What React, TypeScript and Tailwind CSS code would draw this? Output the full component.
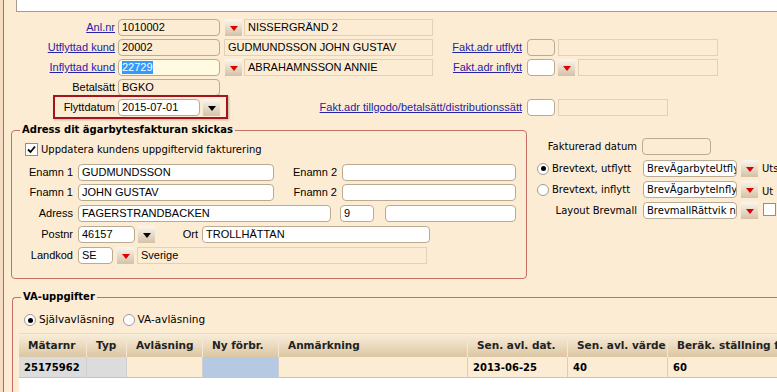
import React from 'react'

// legacy "ägarbyte" form – Tahoma/Verdana look approximated with Liberation Sans / DejaVu Sans

const TAH = "font-['Liberation_Sans',Arial,sans-serif] text-[11px]"
const VER = "font-['DejaVu_Sans',Verdana,sans-serif] text-[10px]"

function Tri({ color = '#e00000' }: { color?: string }) {
  return (
    <svg width="8" height="5" viewBox="0 0 8 5" className="mt-[2px]">
      <polygon points="0,0 8,0 4,5" fill={color} />
    </svg>
  )
}

function DropBtn({ dark = false }: { dark?: boolean }) {
  return (
    <div className="w-[17px] h-[17px] shrink-0 flex items-center justify-center bg-linear-to-b from-[#fbf6ee] to-[#d3c2a7]">
      <Tri color={dark ? '#000000' : '#e00000'} />
    </div>
  )
}

function Field({
  w,
  value = '',
  bg = 'bg-white',
  font = TAH,
  children,
}: {
  w: string
  value?: string
  bg?: string
  font?: string
  children?: React.ReactNode
}) {
  return (
    <div
      className={`${w} ${bg} ${font} h-[17px] shrink-0 border border-[#b9aa92] rounded-[4px] px-[3px] flex items-center overflow-hidden whitespace-nowrap text-black`}
    >
      {children ?? value}
    </div>
  )
}

function ReadOnly({ w, value = '' }: { w: string; value?: string }) {
  return (
    <div className={`${w} ${TAH} h-[17px] shrink-0 border border-[#e2d1b8] px-[3px] flex items-center overflow-hidden whitespace-nowrap text-black`}>
      {value}
    </div>
  )
}

function Label({ w, text, link = false, font = TAH }: { w: string; text: string; link?: boolean; font?: string }) {
  return (
    <div className={`${w} ${font} shrink-0 text-right whitespace-nowrap ${link ? 'text-[#2323a8] underline' : 'text-black'}`}>
      {text}
    </div>
  )
}

function Radio({ checked = false }: { checked?: boolean }) {
  return (
    <div className="w-[12px] h-[12px] shrink-0 rounded-full border border-[#9c9c9c] bg-white flex items-center justify-center">
      {checked && <div className="w-[5px] h-[5px] rounded-full bg-black" />}
    </div>
  )
}

function CheckBox({ checked = false }: { checked?: boolean }) {
  return (
    <div className="w-[13px] h-[13px] shrink-0 border border-[#8f8f8f] bg-white flex items-center justify-center">
      {checked && (
        <svg width="9" height="9" viewBox="0 0 9 9">
          <path d="M1 4.5 L3.5 7 L8 1.5" stroke="#000" strokeWidth="1.8" fill="none" />
        </svg>
      )}
    </div>
  )
}

const cols = [
  { name: 'Mätarnr', w: 'w-[68px]', cell: 'bg-[#dcdcdc]', value: '25175962' },
  { name: 'Typ', w: 'w-[40px]', cell: 'bg-[#dcdcdc]', value: '' },
  { name: 'Avläsning', w: 'w-[76px]', cell: '', value: '' },
  { name: 'Ny förbr.', w: 'w-[76px]', cell: 'bg-[#b6c9e2]', value: '' },
  { name: 'Anmärkning', w: 'w-[189px]', cell: '', value: '' },
  { name: 'Sen. avl. dat.', w: 'w-[100px]', cell: '', value: '2013-06-25' },
  { name: 'Sen. avl. värde', w: 'w-[100px]', cell: '', value: '40' },
  { name: 'Beräk. ställning flyttdatum', w: 'w-[160px]', cell: '', value: '60' },
]

export default function App() {
  return (
    <div className="w-[777px] h-[392px] overflow-hidden bg-[#f6dcc3] pl-[3px]">
      <div className="h-full border-l border-[#c4625a] bg-[#fdecd4] flex flex-col">
        {/* top white strip */}
        <div className="ml-[12px] h-[12px] shrink-0 bg-white border-l border-b border-[#a99b8a]" />

        {/* header rows */}
        <div className="flex flex-col gap-[3px] mt-[7px] -ml-[4px]">
          <div className="flex items-center h-[17px]">
            <Label w="w-[115px]" text="Anl.nr" link />
            <div className="ml-[3px]"><Field w="w-[102px]" value="1010002" bg="bg-[#fdecd4]" /></div>
            <div className="ml-[5px]"><DropBtn /></div>
            <div className="ml-[2px]"><ReadOnly w="w-[189px]" value="NISSERGRÄND 2" /></div>
          </div>
          <div className="flex items-center h-[17px]">
            <Label w="w-[115px]" text="Utflyttad kund" link />
            <div className="ml-[3px]"><Field w="w-[102px]" value="20002" bg="bg-[#fdecd4]" /></div>
            <div className="ml-[4px]"><ReadOnly w="w-[209px]" value="GUDMUNDSSON JOHN GUSTAV" /></div>
            <Label w="w-[89px]" text="Fakt.adr utflytt" link />
            <div className="ml-[5px]"><Field w="w-[28px]" bg="bg-[#fdecd4]" /></div>
            <div className="ml-[3px]"><ReadOnly w="w-[160px]" /></div>
          </div>
          <div className="flex items-center h-[17px]">
            <Label w="w-[115px]" text="Inflyttad kund" link />
            <div className="ml-[3px]">
              <Field w="w-[102px]" bg="bg-[#fffbe2]">
                <span className="bg-[#3399ff] text-white leading-[13px]">22729</span>
              </Field>
            </div>
            <div className="ml-[5px]"><DropBtn /></div>
            <div className="ml-[2px]"><ReadOnly w="w-[189px]" value="ABRAHAMNSSON ANNIE" /></div>
            <Label w="w-[89px]" text="Fakt.adr inflytt" link />
            <div className="ml-[5px]"><Field w="w-[28px]" /></div>
            <div className="ml-[3px]"><DropBtn /></div>
            <div className="ml-[3px]"><ReadOnly w="w-[140px]" /></div>
          </div>
          <div className="flex items-center h-[17px]">
            <Label w="w-[115px]" text="Betalsätt" />
            <div className="ml-[3px]"><Field w="w-[102px]" value="BGKO" bg="bg-[#fdecd4]" /></div>
          </div>
          <div className="flex items-center -mt-[4px]">
            <div className="ml-[53px] w-[175px] h-[24px] shrink-0 border-2 border-[#a3141c] flex items-center shadow-[1px_1px_2px_rgba(0,0,0,0.25)]">
              <Label w="w-[60px]" text="Flyttdatum" />
              <div className="ml-[3px]"><Field w="w-[82px]" value="2015-07-01" /></div>
              <div className="ml-[3px]"><DropBtn dark /></div>
            </div>
            <Label w="w-[294px]" text="Fakt.adr tillgodo/betalsätt/distributionssätt" link />
            <div className="ml-[5px]"><Field w="w-[28px]" /></div>
            <div className="ml-[3px]"><ReadOnly w="w-[110px]" /></div>
          </div>
        </div>

        {/* address group + letter settings */}
        <div className="flex mt-[5px] -ml-[4px]">
          <fieldset className="ml-[11px] w-[516px] shrink-0 border border-[#c66f64] rounded-[4px] px-0 pb-[14px]">
            <legend className="ml-[8px] px-[2px] font-['DejaVu_Sans',Verdana,sans-serif] text-[10px] font-bold leading-[12px] text-black">
              Adress dit ägarbytesfakturan skickas
            </legend>
            <div className="flex flex-col">
              <div className="flex items-center h-[13px] mt-[7px] ml-[13px]">
                <CheckBox checked />
                <span className={`${VER} ml-[3px] text-black whitespace-nowrap`}>Uppdatera kundens uppgiftervid fakturering</span>
              </div>
              <div className="flex items-center h-[17px] mt-[8px]">
                <Label w="w-[61px]" text="Enamn 1" />
                <div className="ml-[5px]"><Field w="w-[196px]" value="GUDMUNDSSON" /></div>
                <Label w="w-[63px]" text="Enamn 2" />
                <div className="ml-[5px]"><Field w="w-[174px]" /></div>
              </div>
              <div className="flex items-center h-[17px] mt-[3px]">
                <Label w="w-[61px]" text="Fnamn 1" />
                <div className="ml-[5px]"><Field w="w-[196px]" value="JOHN GUSTAV" /></div>
                <Label w="w-[63px]" text="Fnamn 2" />
                <div className="ml-[5px]"><Field w="w-[174px]" /></div>
              </div>
              <div className="flex items-center h-[17px] mt-[4px]">
                <Label w="w-[61px]" text="Adress" />
                <div className="ml-[5px]"><Field w="w-[253px]" value="FAGERSTRANDBACKEN" /></div>
                <div className="ml-[9px]"><Field w="w-[34px]" value="9" /></div>
                <div className="ml-[11px]"><Field w="w-[131px]" /></div>
              </div>
              <div className="flex items-center h-[17px] mt-[4px]">
                <Label w="w-[61px]" text="Postnr" />
                <div className="ml-[5px]"><Field w="w-[57px]" value="46157" /></div>
                <div className="ml-[3px]"><DropBtn dark /></div>
                <Label w="w-[43px]" text="Ort" />
                <div className="ml-[4px]"><Field w="w-[228px]" value="TROLLHÄTTAN" /></div>
              </div>
              <div className="flex items-center h-[17px] mt-[4px]">
                <Label w="w-[61px]" text="Landkod" />
                <div className="ml-[5px]"><Field w="w-[35px]" value="SE" /></div>
                <div className="ml-[4px]"><DropBtn /></div>
                <div className="ml-[3px]"><ReadOnly w="w-[290px]" value="Sverige" /></div>
              </div>
            </div>
          </fieldset>

          <div className="ml-[10px] pt-[14px] flex flex-col">
            <div className="flex items-center h-[17px]">
              <Label w="w-[100px]" text="Fakturerad datum" font={VER} />
              <div className="ml-[5px]"><Field w="w-[69px]" bg="bg-[#fdecd4]" /></div>
            </div>
            <div className="flex items-center h-[17px] mt-[5px]">
              <div className="w-[106px] shrink-0 flex items-center">
                <Radio checked />
                <span className={`${VER} ml-[3px] text-black whitespace-nowrap`}>Brevtext, utflytt</span>
              </div>
              <Field w="w-[94px]" value="BrevÄgarbyteUtflytt" font={VER} />
              <div className="ml-[4px]"><DropBtn /></div>
              <span className={`${VER} ml-[4px] text-black whitespace-nowrap`}>Uts</span>
            </div>
            <div className="flex items-center h-[17px] mt-[4px]">
              <div className="w-[106px] shrink-0 flex items-center">
                <Radio />
                <span className={`${VER} ml-[3px] text-black whitespace-nowrap`}>Brevtext, inflytt</span>
              </div>
              <Field w="w-[94px]" value="BrevÄgarbyteInflytt" font={VER} />
              <div className="ml-[4px]"><DropBtn /></div>
              <span className={`${VER} ml-[4px] mt-[3px] text-black whitespace-nowrap`}>Ut</span>
            </div>
            <div className="flex items-center h-[17px] mt-[4px]">
              <Label w="w-[100px]" text="Layout Brevmall" font={VER} />
              <div className="ml-[6px]"><Field w="w-[94px]" value="BrevmallRättvik ny" font={VER} /></div>
              <div className="ml-[4px]"><DropBtn /></div>
              <div className="ml-[5px] -mt-[3px]"><CheckBox /></div>
            </div>
          </div>
        </div>

        {/* VA group */}
        <fieldset className="ml-[8px] mt-[12px] w-[900px] border-l border-t border-[#c66f64] rounded-tl-[4px] px-0 flex-1">
          <legend className="ml-[8px] px-[2px] font-['DejaVu_Sans',Verdana,sans-serif] text-[10px] font-bold leading-[12px] text-black">
            VA-uppgifter
          </legend>
          <div className="flex items-center h-[12px] mt-[11px] ml-[11px] font-['DejaVu_Sans',Verdana,sans-serif] text-[10.5px] text-black">
            <Radio checked />
            <span className="ml-[3px]">Självavläsning</span>
            <div className="ml-[8px]"><Radio /></div>
            <span className="ml-[3px]">VA-avläsning</span>
          </div>
          <div className="ml-[6px] mt-[7px] flex flex-col bg-white h-[60px]">
            <div className="flex h-[24px] bg-linear-to-b from-[#f9eedb] to-[#dcc6a2] border-t border-[#e8dcc8]">
              {cols.map((c) => (
                <div
                  key={c.name}
                  className={`${c.w} shrink-0 border-r border-[#f3e8d6] pl-[9px] flex items-center whitespace-nowrap font-['DejaVu_Sans',Verdana,sans-serif] text-[10.5px] font-bold text-[#222]`}
                >
                  {c.name}
                </div>
              ))}
            </div>
            <div className="flex h-[21px] bg-[#fdecd4] border-b border-[#c4c4c4]">
              {cols.map((c) => (
                <div
                  key={c.name}
                  className={`${c.w} ${c.cell} shrink-0 border-r border-[#cfcfcf] pl-[5px] flex items-center whitespace-nowrap font-['DejaVu_Sans',Verdana,sans-serif] text-[10px] font-bold text-black`}
                >
                  {c.value}
                </div>
              ))}
            </div>
          </div>
        </fieldset>
      </div>
    </div>
  )
}
